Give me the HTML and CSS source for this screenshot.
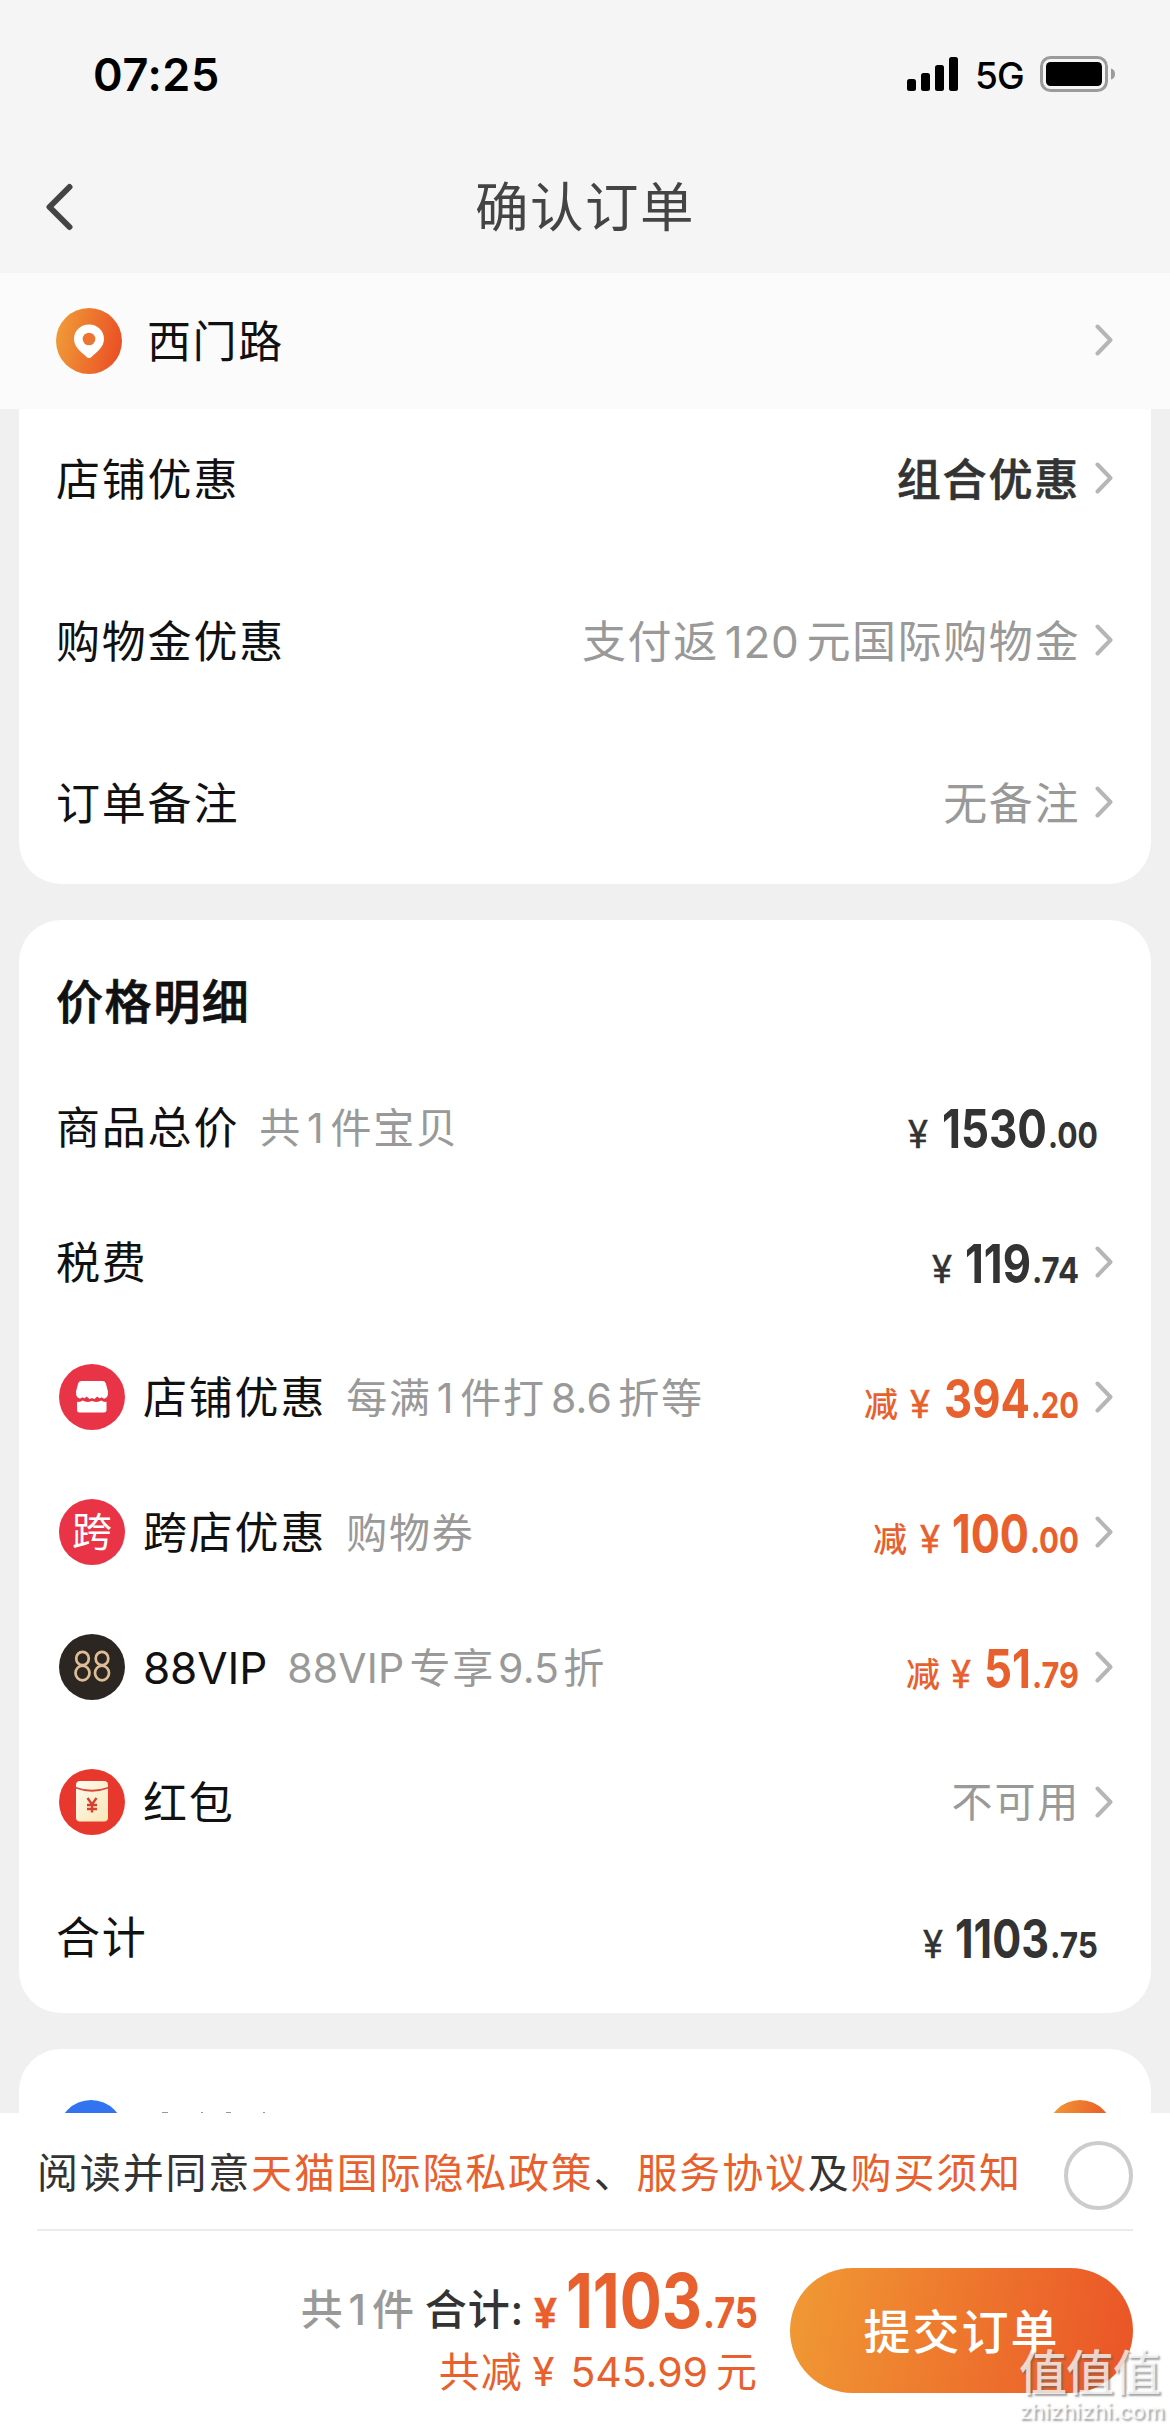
FILE: index.html
```html
<!DOCTYPE html>
<html lang="zh-CN">
<head>
<meta charset="utf-8">
<title>确认订单</title>
<link rel="stylesheet" href="styles.css">
</head>
<body>
<svg width="0" height="0" class="defs">
  <defs>
    <linearGradient id="orange" x1="0" y1="0.4" x2="1" y2="0.6"><stop offset="0" stop-color="#f09a38"/><stop offset="1" stop-color="#ea4f24"/></linearGradient>
    <linearGradient id="cream" x1="0" y1="0" x2="1" y2="1"><stop offset="0" stop-color="#fffaf0"/><stop offset="1" stop-color="#f9e6b4"/></linearGradient>
    <symbol id="chevron" viewBox="0 0 18 32"><path d="M2.5 2.5 15.5 16 2.5 29.5" fill="none" stroke="#b6b6b6" stroke-width="4" stroke-linecap="round" stroke-linejoin="round"/></symbol>
  </defs>
</svg>
<div class="screen">
  <header class="header">
    <div class="status">
      <span class="time">07:25</span>
      <svg class="signal" width="52" height="36" viewBox="0 0 52 36"><rect x="0" y="23" width="9" height="12" rx="2.5"/><rect x="14" y="17" width="9" height="18" rx="2.5"/><rect x="28" y="9" width="9" height="26" rx="2.5"/><rect x="42" y="1" width="9" height="34" rx="2.5"/></svg>
      <span class="network">5G</span>
      <svg class="battery" width="76" height="38" viewBox="0 0 76 38"><rect x="1.500" y="2.500" width="65" height="33" rx="9" fill="none" stroke="#9b9b9b" stroke-width="3"/><rect x="6" y="7" width="56" height="24" rx="4.500"/><path d="M71 13.500q4 1 4 5.500t-4 5.500z" fill="#9b9b9b"/></svg>
    </div>
    <div class="titlebar">
      <svg class="back" width="28" height="48" viewBox="0 0 28 48"><path d="M24.500 4 4.500 24l20 20" fill="none" stroke="#444" stroke-width="6" stroke-linecap="round" stroke-linejoin="round"/></svg>
      <h1>确认订单</h1>
    </div>
  </header>

  <div class="address">
    <svg width="66" height="66" viewBox="0 0 66 66"><circle cx="33" cy="33" r="33" fill="url(#orange)"/><path d="M33 16.500c8.500 0 15 6.300 15 14.500 0 8-6.800 12.500-12.300 17.800q-2.700 2.400-5.400 0C24.800 43.500 18 39 18 31c0-8.200 6.500-14.500 15-14.500z" fill="#fff"/><circle cx="33" cy="31" r="6.300" fill="#ee7431"/></svg>
    <span class="place">西门路</span>
    <svg class="chev"><use href="#chevron"/></svg>
  </div>

  <main class="content">
    <section class="card options">
      <div class="row"><span class="label">店铺优惠</span><span class="value strong">组合优惠</span><svg class="chev"><use href="#chevron"/></svg></div>
      <div class="row"><span class="label">购物金优惠</span><span class="value">支付返<span class="num">120</span>元国际购物金</span><svg class="chev"><use href="#chevron"/></svg></div>
      <div class="row"><span class="label">订单备注</span><span class="value">无备注</span><svg class="chev"><use href="#chevron"/></svg></div>
    </section>

    <section class="card prices">
      <h2>价格明细</h2>
      <div class="row total">
        <span class="label">商品总价</span><span class="sub">共<span class="one">1</span>件宝贝</span>
        <svg class="price" width="230" height="60"><text x="41" y="50" class="yen">¥</text><text x="75" y="50" class="int" textLength="105" lengthAdjust="spacingAndGlyphs">1530</text><text x="181" y="50" class="dec" textLength="50" lengthAdjust="spacingAndGlyphs">.00</text></svg>
      </div>
      <div class="row">
        <span class="label">税费</span>
        <svg class="price" width="230" height="60"><text x="83" y="50" class="yen">¥</text><text x="116" y="50" class="int" textLength="66" lengthAdjust="spacingAndGlyphs">119</text><text x="183" y="50" class="dec" textLength="47" lengthAdjust="spacingAndGlyphs">.74</text></svg>
        <svg class="chev"><use href="#chevron"/></svg>
      </div>
      <div class="row with-icon">
        <svg class="icon" width="66" height="66" viewBox="0 0 66 66"><circle cx="33" cy="33" r="33" fill="#e83446"/><path d="M22.500 17h21q2.500 0 3.300 2.300L49 27.500q.5 7.500-5.500 7.500-3.300 0-5.200-2.500Q36 35.500 33 35.500t-5.300-3Q25.500 35 22.500 35q-6-.5-5.500-7.500l2.200-8.200Q20 17 22.500 17z" fill="#fff"/><path d="M18 37.500q3 1 5.500-1.300 4.500 2.700 9.500.3 5 2.400 9.500-.3Q45 38.500 47.500 37.500V46q0 2.500-2.500 2.500H20.500q-2.500 0-2.500-2.500z" fill="#fff"/><path d="M17.500 36q3 1 6-1.300 4.500 3.200 9.500.8 5 2.400 9.500-.8 3 2.300 6 1.300" fill="none" stroke="#e83446" stroke-width="2.500"/></svg>
        <span class="label">店铺优惠</span><span class="sub">每满<span class="one">1</span>件打<span class="num">8.6</span>折等</span>
        <svg class="price off" width="230" height="60"><text x="15" y="49" class="cut">减</text><text x="61" y="50" class="yen">¥</text><text x="95" y="50" class="int" textLength="86" lengthAdjust="spacingAndGlyphs">394</text><text x="182" y="50" class="dec" textLength="48" lengthAdjust="spacingAndGlyphs">.20</text></svg>
        <svg class="chev"><use href="#chevron"/></svg>
      </div>
      <div class="row with-icon">
        <span class="icon kua">跨</span>
        <span class="label">跨店优惠</span><span class="sub">购物券</span>
        <svg class="price off" width="230" height="60"><text x="24" y="49" class="cut">减</text><text x="71" y="50" class="yen">¥</text><text x="103" y="50" class="int" textLength="77" lengthAdjust="spacingAndGlyphs">100</text><text x="181" y="50" class="dec" textLength="49" lengthAdjust="spacingAndGlyphs">.00</text></svg>
        <svg class="chev"><use href="#chevron"/></svg>
      </div>
      <div class="row with-icon">
        <svg class="icon" width="66" height="66" viewBox="0 0 66 66"><circle cx="33" cy="33" r="33" fill="#2c2623"/><g fill="none" stroke="#dfbd94" stroke-width="2.700"><ellipse cx="23.500" cy="24.500" rx="6.300" ry="6.700"/><ellipse cx="23.500" cy="39" rx="7" ry="7.300"/><ellipse cx="43" cy="24.500" rx="6.300" ry="6.700"/><ellipse cx="43" cy="39" rx="7" ry="7.300"/></g></svg>
        <span class="label latin">88VIP</span><span class="sub tight"><span class="vip">88VIP</span>专享<span class="num">9.5</span>折</span>
        <svg class="price off" width="230" height="60"><text x="57" y="49" class="cut">减</text><text x="102" y="50" class="yen">¥</text><text x="135" y="50" class="int" textLength="47" lengthAdjust="spacingAndGlyphs">51</text><text x="183" y="50" class="dec" textLength="47" lengthAdjust="spacingAndGlyphs">.79</text></svg>
        <svg class="chev"><use href="#chevron"/></svg>
      </div>
      <div class="row with-icon">
        <svg class="icon" width="66" height="66" viewBox="0 0 66 66"><circle cx="33" cy="33" r="33" fill="#e8382d"/><rect x="17" y="12" width="32" height="40.500" rx="4" fill="url(#cream)"/><path d="M16 18.500q17 6.500 34 0" fill="none" stroke="#d9473a" stroke-width="1.800"/><path d="M28.500 29l4.500 6.500 4.500-6.500M33 35.500V43.500M28 36h10M28 40h10" fill="none" stroke="#d8412f" stroke-width="2.400"/></svg>
        <span class="label">红包</span><span class="value small">不可用</span>
        <svg class="chev"><use href="#chevron"/></svg>
      </div>
      <div class="row total">
        <span class="label">合计</span>
        <svg class="price" width="230" height="60"><text x="56" y="50" class="yen">¥</text><text x="88" y="50" class="int" textLength="94" lengthAdjust="spacingAndGlyphs">1103</text><text x="183" y="50" class="dec" textLength="48" lengthAdjust="spacingAndGlyphs">.75</text></svg>
      </div>
    </section>

    <section class="card payment">
      <svg width="66" height="66"><circle cx="33" cy="33" r="33" fill="#3274f0"/></svg>
      <svg class="peek" width="110" height="3"><path d="M1 1.500h6M40 1.500h2M65 1.500h5M102 1.500h2" stroke="#999" stroke-width="1"/></svg>
      <svg class="picked" width="66" height="66"><circle cx="33" cy="33" r="33" fill="url(#orange)"/></svg>
    </section>
  </main>

  <footer class="footer">
    <div class="agree">
      <p>阅读并同意<a>天猫国际隐私政策</a>、<a>服务协议</a>及<a>购买须知</a></p>
      <span class="radio"></span>
    </div>
    <div class="checkout">
      <div class="sum">
        <div class="line">
          <span class="count">共<span class="one">1</span>件</span>
          <span class="sumlabel">合计:</span>
          <svg class="price off big" width="226" height="70"><text x="2" y="60" class="yen">¥</text><text x="34" y="60" class="int" textLength="136" lengthAdjust="spacingAndGlyphs">1103</text><text x="171" y="60" class="dec" textLength="55" lengthAdjust="spacingAndGlyphs">.75</text></svg>
        </div>
        <div class="saved">共减<span class="syen">¥</span><span class="amount">545.99</span>元</div>
      </div>
      <button class="submit">提交订单</button>
    </div>
  </footer>
  <div class="watermark"><b>值值值</b><span>zhizhizhi.com</span></div>
</div>
</body>
</html>
```
FILE: styles.css
```css
* { box-sizing: border-box; margin: 0; padding: 0; }
body { background: #f0f0f0; font-family: Inter, "Noto Sans CJK SC", sans-serif; line-height: 1; color: #111; }
svg { display: block; flex: none; }
.defs { position: absolute; }
.screen { position: relative; width: 1170px; height: 2430px; overflow: hidden; display: flex; flex-direction: column; white-space: nowrap; }

.header { height: 273px; flex: none; background: #f5f5f5; }
.status { height: 148px; display: flex; align-items: center; padding: 0 54px 0 93px; }
.time { font-size: 45px; font-weight: 600; color: #000; letter-spacing: .6px; }
.signal { margin-left: auto; }
.network { font-size: 37px; font-weight: 500; color: #000; margin: 3px 15px 0 16px; letter-spacing: -.8px; width: 50px; }
.titlebar { height: 118px; display: grid; grid-template-columns: 120px 1fr 120px; align-items: center; }
.back { margin-left: 45px; }
h1 { text-align: center; font-size: 53.5px; font-weight: 400; letter-spacing: 1.5px; color: #444; padding-top: 2px; }

.address { height: 136px; flex: none; background: #fbfbfb; display: flex; align-items: center; padding: 0 57px 0 56px; }
.place { font-size: 44px; letter-spacing: 1.6px; margin-left: 25px; padding-top: 1px; }
.chev { width: 18px; height: 32px; margin: 0 0 2px 16px; }
.address .chev { margin-left: auto; }

.content { height: 1704px; flex: none; overflow: hidden; display: flex; flex-direction: column; gap: 36px; padding: 0 19px; }
.card { background: #fff; border-radius: 42px; flex: none; padding: 0 38px 0 37px; }
.options { height: 475px; border-radius: 0 0 42px 42px; }
.row { display: flex; align-items: center; height: 135px; }
.options .row { height: 162px; }
.options .row:first-child { height: 151px; padding-bottom: 11px; }
.label { font-size: 44px; letter-spacing: 1.8px; padding-top: 1px; }
.latin { letter-spacing: -.1px; padding-top: 0; }
.value { margin-left: auto; margin-right: -1px; font-size: 44px; letter-spacing: 1.6px; color: #999; padding-top: 1px; }
.strong { font-weight: 500; -webkit-text-stroke: .6px #333; letter-spacing: 1.8px; color: #333; }
.value .num { margin: 0 7px 0 6px; letter-spacing: .7px; }
.value.small { font-size: 41px; letter-spacing: 1.8px; padding-top: 0; }
.sub { font-size: 41px; letter-spacing: 1.8px; color: #999; margin-left: 20px; padding-top: 1px; }
.one { margin: 0 5px 0 5px; }
.sub .num { margin: 0 6px 0 5px; letter-spacing: .2px; }
.sub.tight .num { margin: 0 4px 0 3px; }
.vip { margin-right: 5px; letter-spacing: .2px; }
.icon { margin: 0 18px 1px 3px; }

.prices { height: 1093px; padding-top: 50px; }
h2 { font-size: 47px; font-weight: 500; -webkit-text-stroke: .7px #111; letter-spacing: 1.6px; height: 90px; padding-top: 8px; }
.price { margin-left: auto; fill: #333; overflow: visible; }
.total .price { margin-right: 16px; }
.off { fill: #e8602d; }
.yen { font: 400 38px Roboto, sans-serif; stroke: #333; stroke-width: .3px; }
.off .yen { stroke: #e8602d; }
.int { font: 700 53px Inter, sans-serif; }
.dec { font: 700 36px Inter, sans-serif; }
.cut { font: 500 34px "Noto Sans CJK SC", sans-serif; }
.kua { width: 66px; height: 66px; flex: none; border-radius: 50%; background: #e83446; color: #fff; font-size: 40px; display: flex; align-items: center; justify-content: center; }

.payment { height: 240px; display: flex; padding-top: 51px; padding-left: 39px; }
.peek { margin: 11px 0 0 37px; }
.picked { margin-left: auto; }

.footer { height: 317px; flex: none; background: #fff; padding: 0 37px; }
.agree { height: 118px; border-bottom: 2px solid #ebebeb; display: flex; align-items: center; justify-content: space-between; padding-top: 5px; }
.agree p { font-size: 41px; letter-spacing: 1.82px; color: #333; }
.agree a { color: #e8602d; }
.radio { width: 69px; height: 69px; border: 4px solid #ccc; border-radius: 50%; margin-top: 3px; }
.checkout { display: flex; justify-content: flex-end; align-items: flex-start; padding-top: 37px; }
.sum { width: 500px; margin-right: 32px; }
.line { height: 70px; display: flex; justify-content: flex-end; align-items: flex-end; }
.count, .sumlabel { font-size: 42px; font-weight: 500; padding-bottom: 7px; }
.count { color: #999; letter-spacing: .9px; }
.sumlabel { color: #333; margin-left: 10px; letter-spacing: .8px; }
.big { margin-left: 8px; }
.big .yen { font-size: 43px; font-weight: 600; }
.big .int { font-size: 76px; }
.big .dec { font-size: 42px; }
.saved { display: flex; justify-content: flex-end; font-size: 41px; letter-spacing: 1px; color: #e8602d; padding-top: 14px; }
.syen { font-family: Roboto, sans-serif; margin: 0 15px 0 10px; }
.amount { margin-right: 8px; letter-spacing: 0; }
.submit { width: 343px; height: 125px; padding-bottom: 5px; border: 0; border-radius: 63px; background: linear-gradient(100deg, #f09a34, #ee7a2e 45%, #ea5427); color: #fff; font: 500 47px Inter, "Noto Sans CJK SC", sans-serif; letter-spacing: 2px; }

.watermark { position: absolute; left: 1019px; top: 2349px; width: 144px; display: flex; flex-direction: column; color: rgba(255,255,255,.75); text-shadow: 2px 2px 2px rgba(90,90,90,.55); }
.watermark b { font-size: 48px; font-weight: 500; letter-spacing: -1px; }
.watermark span { font-size: 22px; font-weight: 500; margin-top: 3px; letter-spacing: 0; }
```
